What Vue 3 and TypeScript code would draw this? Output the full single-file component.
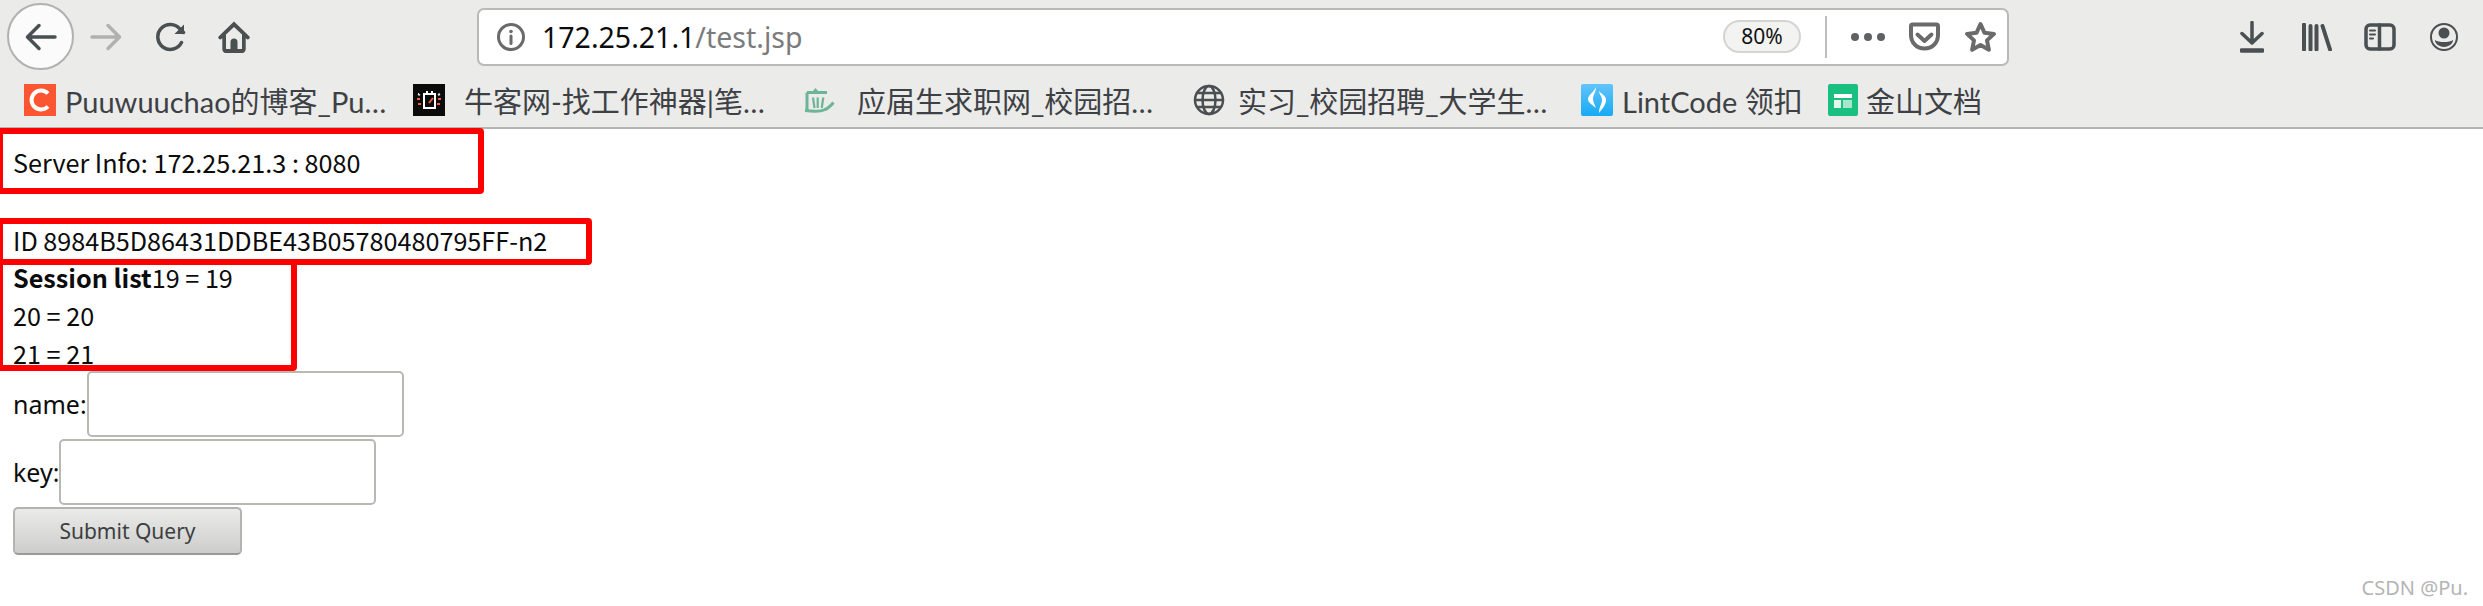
<template>
  <div class="browser">
    <header class="chrome">
      <div class="nav-row">
        <button class="back-btn" type="button" aria-label="Back">
          <svg viewBox="0 0 32 28" class="arrow"><path d="M30 14H3M14 2.500 2.500 14 14 25.500" /></svg>
        </button>
        <svg viewBox="0 0 32 28" class="arrow forward"><path d="M2 14h27M18 2.500 29.500 14 18 25.500" /></svg>
        <svg viewBox="0 0 30 30" class="reload"><path d="M25.500 20.500A12.500 12.500 0 1 1 24 7l3.500 3.500" /><path d="M28 2.500v9.500h-9.500" class="filled" /></svg>
        <svg viewBox="0 0 32 32" class="home">
          <path d="M16 0.500 0.500 15.500c-.8 2 .8 3.200 2.500 2.800l1.300-1V28c0 2.300 1.400 4 3.500 4h16.400c2.100 0 3.500-1.700 3.500-4V17.300l1.300 1c1.700.4 3.300-.8 2.500-2.800zm0 5.500 8 7.500V27.500c0 .4-.2.500-.5.500H19.500v-7a3.500 3.500 0 0 0-7 0v7H8.500c-.3 0-.5-.1-.5-.5V13.500z" fill="#4a4f52" />
        </svg>

        <div class="url-bar">
          <svg viewBox="0 0 28 28" class="info">
            <circle cx="14" cy="14" r="12.500" />
            <circle cx="14" cy="8.500" r="1.800" class="filled" />
            <path d="M14 13v7.500" />
          </svg>
          <span class="url"><span class="host">172.25.21.1</span>/test.jsp</span>
          <span class="zoom-pill">80%</span>
          <span class="divider"></span>
          <span class="dots"><i></i><i></i><i></i></span>
          <svg viewBox="0 0 31 29" class="pocket">
            <path d="M3.500 2.500h24c.7 0 1.500.6 1.500 1.500v9c0 8-6 13.500-13.500 13.500S2 21 2 13V4c0-.9.8-1.500 1.500-1.500z" />
            <path d="M8.500 12.500l7 6.500 7-6.500" />
          </svg>
          <svg viewBox="0 0 33 32" class="star">
            <path d="M16.500 3l4 8.800 9.500 1.100-7 6.500 1.900 9.400-8.400-4.700-8.400 4.700 1.900-9.400-7-6.500 9.500-1.100z" />
          </svg>
        </div>

        <svg viewBox="0 0 24 32" class="download">
          <path d="M12 1.500V21M2 12.500l10 9.500 10-9.500" />
          <path d="M1.500 29.500h21" class="thick" />
        </svg>
        <svg viewBox="0 0 30 28" class="library">
          <path d="M2 1.500v25M8.500 3v23.500M14.500 3v23.500M20.500 3 28 26.500" />
        </svg>
        <svg viewBox="0 0 32 28" class="sidebar">
          <rect x="2" y="2" width="28" height="24" rx="4" />
          <path d="M15.500 2v24" />
          <path d="M6 7.500h5M6 11.500h5M6 15.500h3" class="thin" />
        </svg>
        <svg viewBox="0 0 28 28" class="account">
          <circle cx="14" cy="14" r="13" class="thin" />
          <circle cx="14" cy="10" r="5.500" class="filled" />
          <path d="M5 17c2 1.500 5 2 9 2s7-.5 9-2c.5 3-4 7-9 7s-9.500-4-9-7z" class="filled" />
        </svg>
      </div>

      <nav class="bookmarks">
        <a class="bm bm-csdn">
          <svg viewBox="0 0 32 32" class="favicon">
            <rect width="32" height="32" fill="#fc5531" />
            <path d="M24 9.500a9.500 9.500 0 1 0 0 13" fill="none" stroke="#fff" stroke-width="4" />
          </svg>
          <span>Puuwuuchao的博客_Pu…</span>
        </a>
        <a class="bm bm-nowcoder">
          <svg viewBox="0 0 32 32" class="favicon">
            <rect width="32" height="32" fill="#0b0b0b" />
            <path d="M11 10h11v14H11z" fill="none" stroke="#fff" stroke-width="2" />
            <path d="M14 7v3M19 7v3" stroke="#fff" stroke-width="2" />
            <path d="M20 14l-4 5" stroke="#f0623e" stroke-width="2" />
            <path d="M5 10l2 1M5 10h1M25 11l2-1" stroke="#ddd" stroke-width="2" />
            <path d="M4 15h3M5 20h3M25 15h3M24 20h3" stroke="#f0623e" stroke-width="2" />
          </svg>
          <span>牛客网-找工作神器|笔…</span>
        </a>
        <a class="bm bm-yjs">
          <svg viewBox="0 0 30 32" class="favicon">
            <path d="M2 8.500h20M2 8.500V26" fill="none" stroke="#6cb596" stroke-width="3" />
            <path d="M8 13.500 9.500 24M12.700 13.500V24M18.300 13.500 16.700 24" fill="none" stroke="#6cb596" stroke-width="2.200" />
            <path d="M0 26.500c8 1 16 1 20-1 4-1.500 6-4 8.500-7" fill="none" stroke="#6cb596" stroke-width="3" />
            <path d="M8 7l2.500-3 2.500 3z" fill="#6cb596" />
          </svg>
          <span>应届生求职网_校园招…</span>
        </a>
        <a class="bm bm-intern">
          <svg viewBox="0 0 32 32" class="favicon globe">
            <circle cx="16" cy="16" r="14" />
            <ellipse cx="16" cy="16" rx="6.500" ry="14" />
            <path d="M2 16h28M4 9h24M4 23h24" />
          </svg>
          <span>实习_校园招聘_大学生…</span>
        </a>
        <a class="bm bm-lint">
          <svg viewBox="0 0 32 32" class="favicon">
            <defs>
              <linearGradient id="lint" x1="0" y1="0" x2="0" y2="1">
                <stop offset="0" stop-color="#62c4fb" />
                <stop offset="1" stop-color="#17aaf6" />
              </linearGradient>
            </defs>
            <rect width="32" height="32" rx="2" fill="url(#lint)" />
            <path d="M15 3C13 8 7 11 7 15c0 4 5 6 8 9-1-3-3-6-3-9 0-4 3-7 3-12z" fill="#fff" />
            <path d="M18 7c0 3 3 5 3 9s-3 7-3 13c3-4 7-8 7-13s-5-6-7-9z" fill="#fff" />
          </svg>
          <span>LintCode 领扣</span>
        </a>
        <a class="bm bm-kdocs">
          <svg viewBox="0 0 30 32" class="favicon">
            <rect width="30" height="32" rx="2" fill="#19c07f" />
            <path d="M6 10h18v4H6z" fill="#fff" />
            <path d="M6 16h7v8H6z" fill="#e4f8ef" />
            <path d="M15 16h9v8h-9z" fill="#a6e6cc" />
          </svg>
          <span>金山文档</span>
        </a>
      </nav>
    </header>

    <main class="page">
      <p class="server-info">Server Info: 172.25.21.3 : 8080</p>
      <p class="line id-line">ID 8984B5D86431DDBE43B05780480795FF-n2</p>
      <p class="line"><b>Session list</b>19 = 19</p>
      <p class="line">20 = 20</p>
      <p class="line last">21 = 21</p>

      <form class="login" @submit.prevent>
        <label class="field">name:<input type="text" /></label>
        <label class="field">key:<input type="text" /></label>
        <button class="submit" type="submit">Submit Query</button>
      </form>

      <div class="mark mark-server"></div>
      <div class="mark mark-id"></div>
      <div class="mark mark-session"></div>
    </main>

    <div class="watermark">CSDN @Pu.</div>
  </div>
</template>

<script setup lang="ts">
</script>

<style>
html,
body {
  margin: 0;
  background: #fff;
}
</style>

<style scoped>
.browser {
  position: relative;
  width: 2483px;
  height: 606px;
  overflow: hidden;
  font-family: "Noto Sans", "Noto Sans CJK SC", sans-serif;
}

.chrome {
  height: 127px;
  background: #ebebe9;
  border-bottom: 2px solid #b4b4b1;
}

.nav-row {
  display: flex;
  align-items: center;
  height: 73px;
  padding-left: 7px;
}

.nav-row svg {
  flex: none;
  fill: none;
  stroke: #4a4f52;
  stroke-width: 3.500;
  stroke-linecap: round;
  stroke-linejoin: round;
}

.nav-row svg .filled {
  fill: #4a4f52;
  stroke: none;
}

.back-btn {
  display: flex;
  align-items: center;
  justify-content: center;
  flex: none;
  box-sizing: border-box;
  width: 67px;
  height: 67px;
  padding: 0;
  background: #fbfbfb;
  border: 2px solid #b1b1b1;
  border-radius: 50%;
}

.arrow {
  width: 32px;
  height: 28px;
}

.forward {
  margin-left: 16px;
  stroke: #b1b1b1 !important;
}

.reload {
  width: 30px;
  height: 30px;
  margin-left: 34px;
}

.home {
  width: 32px;
  height: 32px;
  margin-left: 32px;
  stroke: none !important;
}

.url-bar {
  display: flex;
  align-items: center;
  flex: none;
  box-sizing: border-box;
  width: 1532px;
  height: 58px;
  margin-left: 227px;
  padding-left: 18px;
  background: #fff;
  border: 2px solid #b9b9b6;
  border-radius: 7px;
}

.url-bar svg {
  stroke: #6a6a6a;
  stroke-width: 3;
}

.url-bar svg .filled {
  fill: #6a6a6a;
}

.info {
  width: 28px;
  height: 28px;
}

.url {
  margin-left: 17px;
  font-size: 28.500px;
  color: #7b7b7b;
  white-space: nowrap;
}

.host {
  color: #0c0c0d;
}

.zoom-pill {
  box-sizing: border-box;
  width: 78px;
  height: 33px;
  margin-left: auto;
  background: #f3f3f2;
  border: 2px solid #d4d4d2;
  border-radius: 17px;
  font-size: 21px;
  line-height: 29px;
  text-align: center;
  color: #111;
}

.divider {
  width: 2px;
  height: 42px;
  margin-left: 24px;
  background: #bdbdbb;
}

.dots {
  display: flex;
  gap: 5px;
  margin-left: 24px;
}

.dots i {
  width: 8px;
  height: 8px;
  border-radius: 50%;
  background: #5f6264;
}

.pocket {
  width: 31px;
  height: 29px;
  margin-left: 24px;
}

.star {
  width: 33px;
  height: 32px;
  margin-left: 24px;
  margin-right: 10px;
}

.url-bar .pocket,
.url-bar .star {
  stroke-width: 4;
}

.download {
  width: 24px;
  height: 32px;
  margin-left: 231px;
}

.download .thick {
  stroke-width: 4.500;
}

.library {
  width: 30px;
  height: 28px;
  margin-left: 38px;
  stroke-width: 4 !important;
}

.sidebar {
  width: 32px;
  height: 28px;
  margin-left: 32px;
}

.sidebar .thin,
.account .thin {
  stroke-width: 2;
}

.account {
  width: 28px;
  height: 28px;
  margin-left: 34px;
}

.bookmarks {
  display: flex;
  align-items: center;
  height: 54px;
  padding-left: 24px;
  font-family: Lato, "Noto Sans CJK SC", sans-serif;
  font-size: 29px;
  color: #3d4145;
}

.bm {
  display: flex;
  align-items: center;
  flex: none;
  white-space: nowrap;
}

.favicon {
  flex: none;
  width: 32px;
  height: 32px;
  margin-right: 9px;
}

.bm-csdn { width: 389px; }
.bm-nowcoder { width: 392px; }
.bm-nowcoder .favicon { margin-right: 19px; }
.bm-yjs { width: 388px; }
.bm-yjs .favicon { width: 30px; margin-right: 22px; }
.bm-intern { width: 388px; }
.bm-intern .favicon { margin-right: 13px; }
.bm-lint { width: 247px; }
.bm-lint .favicon { margin-right: 9px; }
.bm-kdocs .favicon { width: 30px; margin-right: 8px; }

.globe {
  fill: none;
  stroke: #4a4f52;
  stroke-width: 2.500;
}

.page {
  padding: 14px 0 0 13px;
  font-family: "Noto Sans CJK SC", "Noto Sans", sans-serif;
  font-size: 25.200px;
  line-height: 38px;
  color: #0c0c0d;
}

.server-info {
  margin: 0 0 40px;
}

.line {
  height: 38px;
  margin: 0;
}

.id-line {
  height: 37px;
}

.line.last {
  height: 37px;
}

.line b {
  font-weight: 700;
}

.login {
  display: flex;
  flex-direction: column;
  align-items: flex-start;
  gap: 2px;
}

.field {
  display: flex;
  align-items: center;
  height: 66px;
  font-family: "Noto Sans", sans-serif;
  font-size: 25px;
}

.field input {
  box-sizing: border-box;
  width: 317px;
  height: 66px;
  margin: 0;
  background: #fff;
  border: 2px solid #b9b9b4;
  border-radius: 5px;
}

.submit {
  box-sizing: border-box;
  width: 229px;
  height: 48px;
  padding: 0;
  background: linear-gradient(#ebebe9, #cdcdcb);
  border: 2px solid #b3b3af;
  border-bottom-color: #9a9a96;
  border-radius: 5px;
  font-family: "Noto Sans", sans-serif;
  font-size: 21px;
  color: #3c3f41;
}

.mark {
  position: absolute;
  box-sizing: border-box;
  left: -3px;
  border: 6px solid #fe0000;
  border-radius: 4px;
}

.mark-server {
  top: 128px;
  width: 487px;
  height: 66px;
}

.mark-id {
  top: 218px;
  width: 595px;
  height: 47px;
}

.mark-session {
  top: 259px;
  width: 300px;
  height: 112px;
}

.watermark {
  position: absolute;
  right: 15px;
  bottom: 5px;
  font-size: 20px;
  line-height: 26px;
  color: #b4b4b4;
}
</style>
